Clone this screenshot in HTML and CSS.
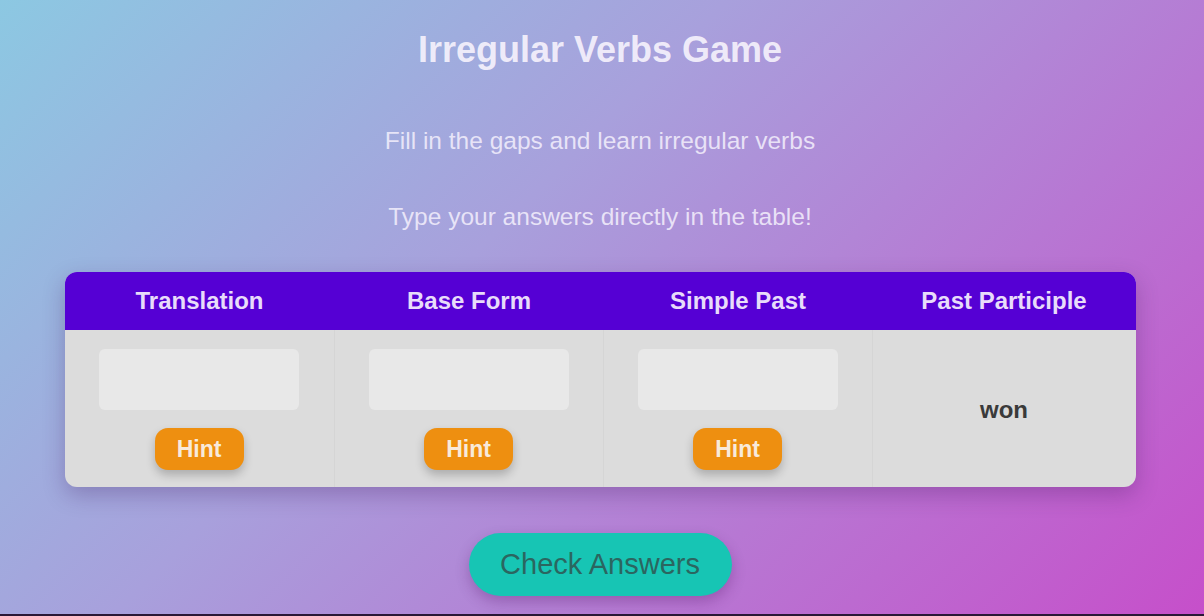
FILE: index.html
```html
<!DOCTYPE html>
<html lang="en">
<head>
<meta charset="utf-8">
<title>Irregular Verbs Game</title>
<link rel="stylesheet" href="styles.css">
</head>
<body>
<main class="page">
  <h1 class="title">Irregular Verbs Game</h1>
  <p class="intro intro-first">Fill in the gaps and learn irregular verbs</p>
  <p class="intro intro-second">Type your answers directly in the table!</p>

  <div class="verb-table">
    <div class="head-row">
      <div class="head-cell">Translation</div>
      <div class="head-cell">Base Form</div>
      <div class="head-cell">Simple Past</div>
      <div class="head-cell">Past Participle</div>
    </div>
    <div class="body-row">
      <div class="cell">
        <input class="answer" type="text">
        <button class="hint" type="button">Hint</button>
      </div>
      <div class="cell">
        <input class="answer" type="text">
        <button class="hint" type="button">Hint</button>
      </div>
      <div class="cell">
        <input class="answer" type="text">
        <button class="hint" type="button">Hint</button>
      </div>
      <div class="cell cell-given">won</div>
    </div>
  </div>

  <div class="actions">
    <button class="check" type="button">Check Answers</button>
  </div>
</main>
</body>
</html>
```

FILE: styles.css
```css
html {
  background: #2a1836;
}

body {
  margin: 0;
  height: 614px;
  overflow: hidden;
  font-family: "Liberation Sans", Arial, sans-serif;
  background: linear-gradient(135deg, #8cc8e2 0%, #a8a0dc 40%, #c64fca 100%);
}

.page {
  padding-top: 29px;
  padding-right: 4px;
  text-align: center;
}

.title {
  margin: 0;
  font-size: 36px;
  font-weight: bold;
  color: rgba(246, 242, 252, 0.92);
}

.intro {
  margin: 0;
  font-size: 24.5px;
  color: rgba(244, 240, 252, 0.85);
}

.intro-first {
  margin-top: 56px;
}

.intro-second {
  margin-top: 48px;
}

.verb-table {
  width: 1071px;
  margin: 41px auto 0;
  border-radius: 12px;
  overflow: hidden;
  background: #dcdcdc;
  box-shadow: 0 8px 22px rgba(60, 20, 90, 0.28);
}

.head-row,
.body-row {
  display: grid;
  grid-template-columns: 270px 269px 269px 1fr;
}

.head-row {
  background: #5500d4;
}

.head-cell {
  height: 58px;
  display: flex;
  align-items: center;
  justify-content: center;
  font-size: 24px;
  font-weight: bold;
  color: #e8dcfa;
}

.cell {
  display: flex;
  flex-direction: column;
  align-items: center;
  padding: 19px 0 17px;
  gap: 18px;
  border-right: 1px solid #d5d5d5;
}

.cell-given {
  border-right: none;
  justify-content: center;
  font-size: 24px;
  font-weight: bold;
  color: #3a3a3a;
}

.answer {
  box-sizing: border-box;
  width: 200px;
  height: 61px;
  border: none;
  border-radius: 6px;
  background: #e8e8e8;
  font-family: inherit;
  font-size: 20px;
}

.hint {
  width: 89px;
  height: 42px;
  border: none;
  border-radius: 13px;
  background: #ee8f10;
  color: #f8eadb;
  font-family: inherit;
  font-size: 23px;
  font-weight: bold;
  box-shadow: 0 5px 10px rgba(0, 0, 0, 0.22);
}

.actions {
  margin-top: 46px;
  display: flex;
  justify-content: center;
}

.check {
  width: 263px;
  height: 63px;
  border: none;
  border-radius: 32px;
  background: #17c5b4;
  color: #2b6660;
  font-family: inherit;
  font-size: 29px;
  box-shadow: 0 6px 14px rgba(80, 20, 100, 0.3);
}
```
